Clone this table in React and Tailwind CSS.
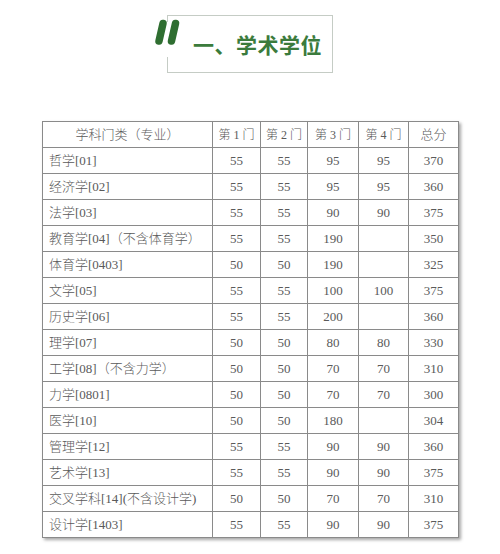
import React from "react";

const rows = [
  ["哲学[01]", "55", "55", "95", "95", "370"],
  ["经济学[02]", "55", "55", "95", "95", "360"],
  ["法学[03]", "55", "55", "90", "90", "375"],
  ["教育学[04]（不含体育学）", "55", "55", "190", "", "350"],
  ["体育学[0403]", "50", "50", "190", "", "325"],
  ["文学[05]", "55", "55", "100", "100", "375"],
  ["历史学[06]", "55", "55", "200", "", "360"],
  ["理学[07]", "50", "50", "80", "80", "330"],
  ["工学[08]（不含力学）", "50", "50", "70", "70", "310"],
  ["力学[0801]", "50", "50", "70", "70", "300"],
  ["医学[10]", "50", "50", "180", "", "304"],
  ["管理学[12]", "55", "55", "90", "90", "360"],
  ["艺术学[13]", "55", "55", "90", "90", "375"],
  ["交叉学科[14](不含设计学)", "50", "50", "70", "70", "310"],
  ["设计学[1403]", "55", "55", "90", "90", "375"],
];

const font = { fontFamily: '"Liberation Serif", "Noto Sans CJK SC", serif' };

export default function App() {
  return (
    <div className="w-[500px] h-[554px] bg-white overflow-hidden" style={font}>
      <div className="pt-[15px] pl-[167px]">
        <div className="relative w-[166px] h-[58px] border border-[#c5ccc5] flex items-center pl-[25px]">
          <div className="absolute left-[-14px] top-[6px] w-[32px] h-[35px] bg-white"></div>
          <svg className="absolute left-[-14px] top-[3px]" width="32" height="30" viewBox="0 0 32 30">
            <path d="M9 4.5 L5 22" stroke="#2f6e31" strokeWidth="7.5" strokeLinecap="round" fill="none" />
            <path d="M21.5 4.5 L17.5 22" stroke="#2f6e31" strokeWidth="7.5" strokeLinecap="round" fill="none" />
          </svg>
          <span
            className="text-[21px] font-bold text-[#3b7b3c] tracking-[0.5px] mt-[1px]"
            style={{ fontFamily: '"Noto Sans CJK SC", sans-serif' }}
          >
            一、学术学位
          </span>
        </div>
      </div>
      <div className="pt-[48px] pl-[42px]">
        <table className="border-collapse text-[13px] text-[#5a5a5a] font-light shadow-[2px_2px_3px_rgba(0,0,0,0.35)]">
          <thead>
            <tr className="h-[26px]">
              <th className="w-[170px] border border-[#8a8a8a] font-light text-center">学科门类（专业）</th>
              <th className="w-[48px] border border-[#8a8a8a] font-light text-[12px]">第 1 门</th>
              <th className="w-[47px] border border-[#8a8a8a] font-light text-[12px]">第 2 门</th>
              <th className="w-[51px] border border-[#8a8a8a] font-light text-[12px]">第 3 门</th>
              <th className="w-[50px] border border-[#8a8a8a] font-light text-[12px]">第 4 门</th>
              <th className="w-[50px] border border-[#8a8a8a] font-light">总分</th>
            </tr>
          </thead>
          <tbody>
            {rows.map((r, i) => (
              <tr key={i} className="h-[26px]">
                <td className="border border-[#8a8a8a] text-left pl-[6px] whitespace-nowrap">{r[0]}</td>
                {r.slice(1).map((c, j) => (
                  <td key={j} className="border border-[#8a8a8a] text-center">{c}</td>
                ))}
              </tr>
            ))}
          </tbody>
        </table>
      </div>
    </div>
  );
}
